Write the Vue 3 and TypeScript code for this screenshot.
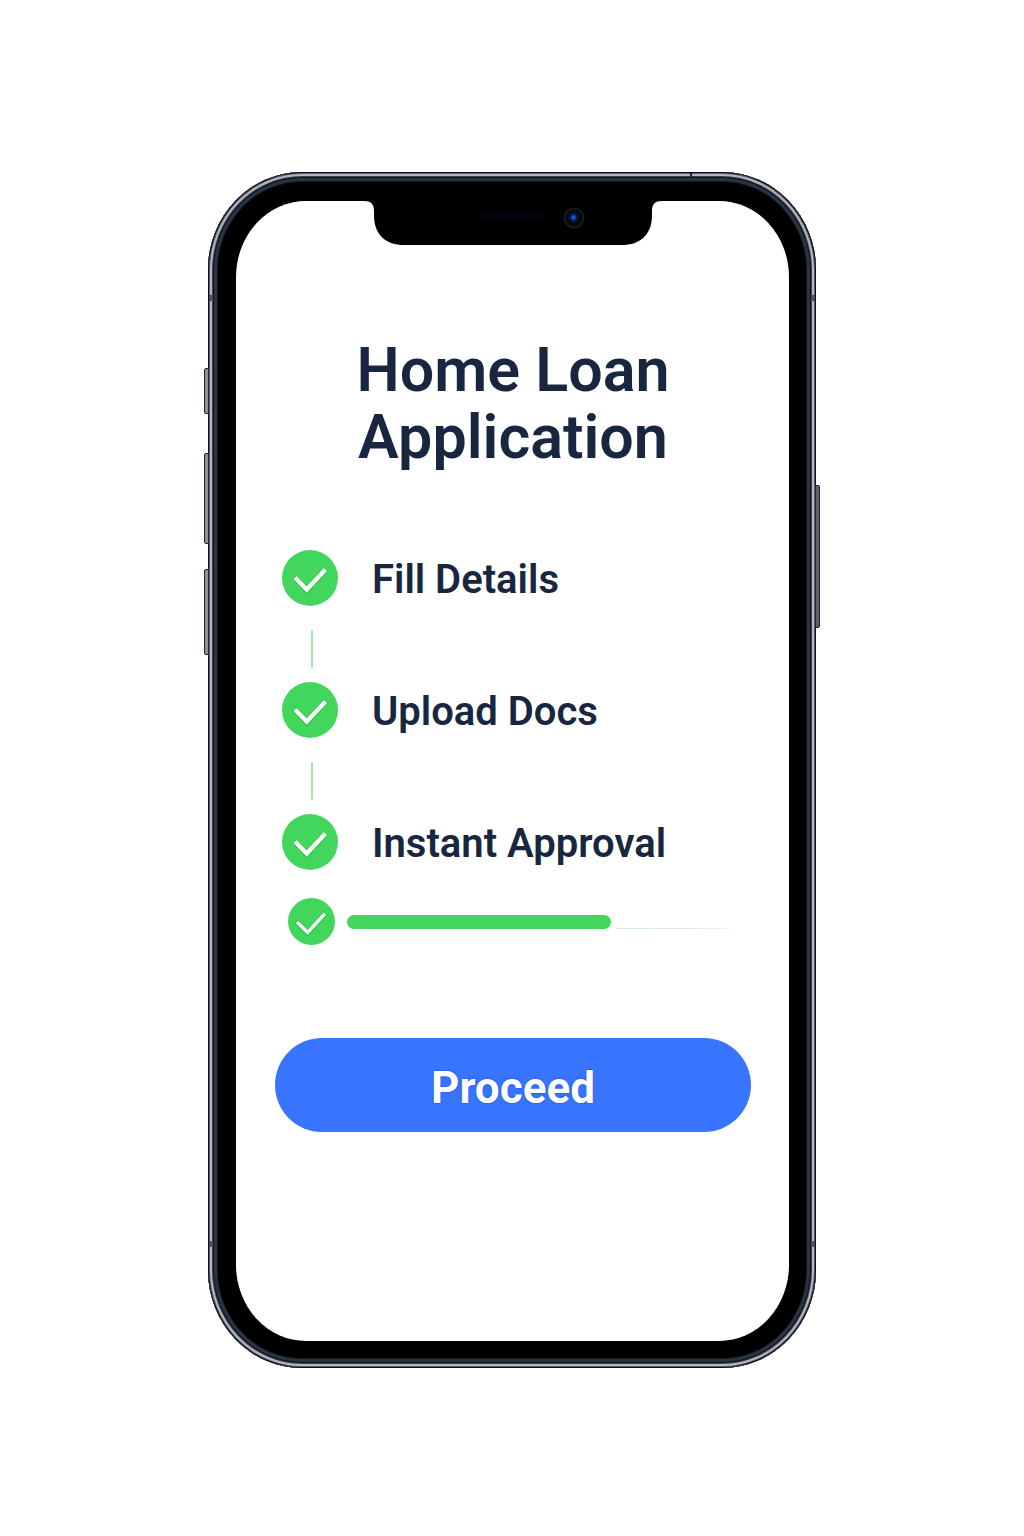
<script setup lang="ts">
interface Step {
  id: number
  label: string
}

const steps: Step[] = [
  { id: 1, label: 'Fill Details' },
  { id: 2, label: 'Upload Docs' },
  { id: 3, label: 'Instant Approval' },
]

const progress = 69
</script>

<template>
  <main class="page">
    <div class="phone">
      <span class="key key-mute"></span>
      <span class="key key-up"></span>
      <span class="key key-down"></span>
      <span class="key key-power"></span>
      <span class="seam seam-top"></span>
      <span class="seam seam-left-high"></span>
      <span class="seam seam-left-low"></span>
      <span class="seam seam-right-high"></span>
      <span class="seam seam-right-low"></span>

      <section class="screen">
        <svg class="notch" viewBox="0 0 298 44" width="298" height="44" aria-hidden="true">
          <defs>
            <radialGradient id="lens">
              <stop offset="0" stop-color="#2f6dff" />
              <stop offset="0.3" stop-color="#0c3cb4" />
              <stop offset="0.6" stop-color="#071638" />
              <stop offset="1" stop-color="#07090f" />
            </radialGradient>
          </defs>
          <path d="M0 -2V0C7 0 10 3 10 10V14C10 34 22 44 40 44H258C276 44 288 34 288 14V10C288 3 291 0 298 0V-2Z" fill="#000" />
          <rect x="114" y="12" width="66" height="7" rx="3" fill="#02060c" />
          <circle cx="210" cy="17" r="9.5" fill="#07080b" stroke="#191b20" stroke-width="2" />
          <circle cx="209.500" cy="16.500" r="6" fill="url(#lens)" />
        </svg>

        <h1 class="title">Home Loan<br />Application</h1>

        <ol class="steps">
          <li v-for="step in steps" :key="step.id" class="step">
            <svg class="badge" viewBox="0 0 56 56" aria-hidden="true">
              <circle cx="28" cy="28" r="28" fill="#43d65d" />
              <path d="M12.500 27L24.700 40L44 19" fill="none" stroke="#20c53f" stroke-width="6" />
              <path d="M13 27.500L24.700 39.500L43.500 19.500" fill="none" stroke="#fff" stroke-width="4.400" />
            </svg>
            <span class="label">{{ step.label }}</span>
          </li>
        </ol>

        <div class="progress">
          <svg class="badge-small" viewBox="0 0 47 47" aria-hidden="true">
            <circle cx="23.500" cy="23.500" r="23.500" fill="#43d65d" />
            <path d="M8.500 23.500L19.700 35L37.500 15" fill="none" stroke="#20c53f" stroke-width="5" />
            <path d="M9 24L19.700 34.500L37 15.500" fill="none" stroke="#fff" stroke-width="3.400" />
          </svg>
          <div
            class="track"
            role="progressbar"
            aria-label="Application progress"
            :aria-valuenow="progress"
            aria-valuemin="0"
            aria-valuemax="100"
          >
            <div class="fill" :style="{ width: progress + '%' }"></div>
            <div class="rest"></div>
          </div>
        </div>

        <button class="proceed" type="button">Proceed</button>
      </section>
    </div>
  </main>
</template>

<style>
body {
  margin: 0;
  background: #fff;
}
</style>

<style scoped>
.page {
  display: flex;
  justify-content: center;
  padding: 172px 16px 168px;
  font-family: Roboto, 'Liberation Sans', sans-serif;
  color: #18273f;
}

.phone {
  position: relative;
  box-sizing: border-box;
  width: 100%;
  max-width: 608px;
  padding: 29px 27px 27px 28px;
  border-radius: 94px / 98px;
  background: #000;
  box-shadow:
    inset 0 0 0 1px #0b0d12,
    inset 0 0 0 2px #5b5f69,
    inset 0 0 0 4px #b3b5c0,
    inset 0 0 0 5px #3d414b,
    inset 0 0 0 6px #0d121b,
    inset 0 0 0 9px #2b3442,
    inset 0 0 0 10px #10151d;
}

.key {
  position: absolute;
  box-sizing: border-box;
  width: 5px;
  border: 1px solid #23262d;
  background: #8d9099;
}

.key-mute,
.key-up,
.key-down {
  left: -4px;
  border-radius: 2px 0 0 2px;
}

.key-mute {
  top: 196px;
  height: 46px;
}

.key-up {
  top: 281px;
  height: 91px;
}

.key-down {
  top: 397px;
  height: 86px;
}

.key-power {
  top: 313px;
  right: -4px;
  height: 143px;
  border-radius: 0 2px 2px 0;
  background: #5b606b;
}

.seam {
  position: absolute;
  width: 4px;
  height: 6px;
  background: #4b505b;
}

.seam-top {
  top: 1px;
  left: 482px;
  width: 2px;
  height: 4px;
  background: #20242c;
}

.seam-left-high,
.seam-left-low {
  left: 1px;
}

.seam-right-high,
.seam-right-low {
  right: 1px;
}

.seam-left-high,
.seam-right-high {
  top: 123px;
}

.seam-left-low,
.seam-right-low {
  bottom: 121px;
}

.screen {
  display: flex;
  flex-direction: column;
  padding: 0 38px 209px 39px;
  border-radius: 70px / 76px;
  background: #fff;
}

.notch {
  align-self: center;
  overflow: visible;
}

.title {
  margin: 92px 0 0;
  font-size: 61px;
  font-weight: 600;
  line-height: 67px;
  text-align: center;
}

.steps {
  margin: 79px 0 0;
  padding: 0 0 0 7px;
  list-style: none;
}

.step {
  display: grid;
  grid-template-columns: 56px 1fr;
  grid-template-rows: 56px auto;
  column-gap: 34px;
  align-items: center;
}

.step:not(:last-child)::after {
  content: '';
  width: 2px;
  height: 38px;
  margin: 24px 0 14px 29px;
  border-radius: 1px;
  background: #a5e6b3;
}

.badge {
  width: 56px;
  height: 56px;
}

.label {
  padding-top: 4px;
  font-size: 40px;
  font-weight: 600;
  line-height: 52px;
  white-space: nowrap;
}

.progress {
  display: flex;
  align-items: center;
  gap: 12px;
  margin: 28px 22px 0 13px;
}

.badge-small {
  flex: none;
  width: 47px;
  height: 47px;
}

.track {
  display: flex;
  flex: 1;
  align-items: flex-end;
  gap: 5px;
}

.fill {
  flex: none;
  height: 14px;
  border-radius: 7px;
  background: #43d65d;
}

.rest {
  flex: 1;
  height: 1px;
  background: linear-gradient(to right, #cfe9dc, #dcebe4 60%, #eef4f1);
}

.proceed {
  height: 94px;
  margin: 93px 0 0;
  padding: 6px 0 0;
  border: 0;
  border-radius: 47px;
  background: #3875ff;
  color: #fff;
  font-family: inherit;
  font-size: 44px;
  font-weight: 700;
  line-height: 52px;
  text-shadow: 0 0 2px #0b3df0;
  cursor: pointer;
}
</style>
